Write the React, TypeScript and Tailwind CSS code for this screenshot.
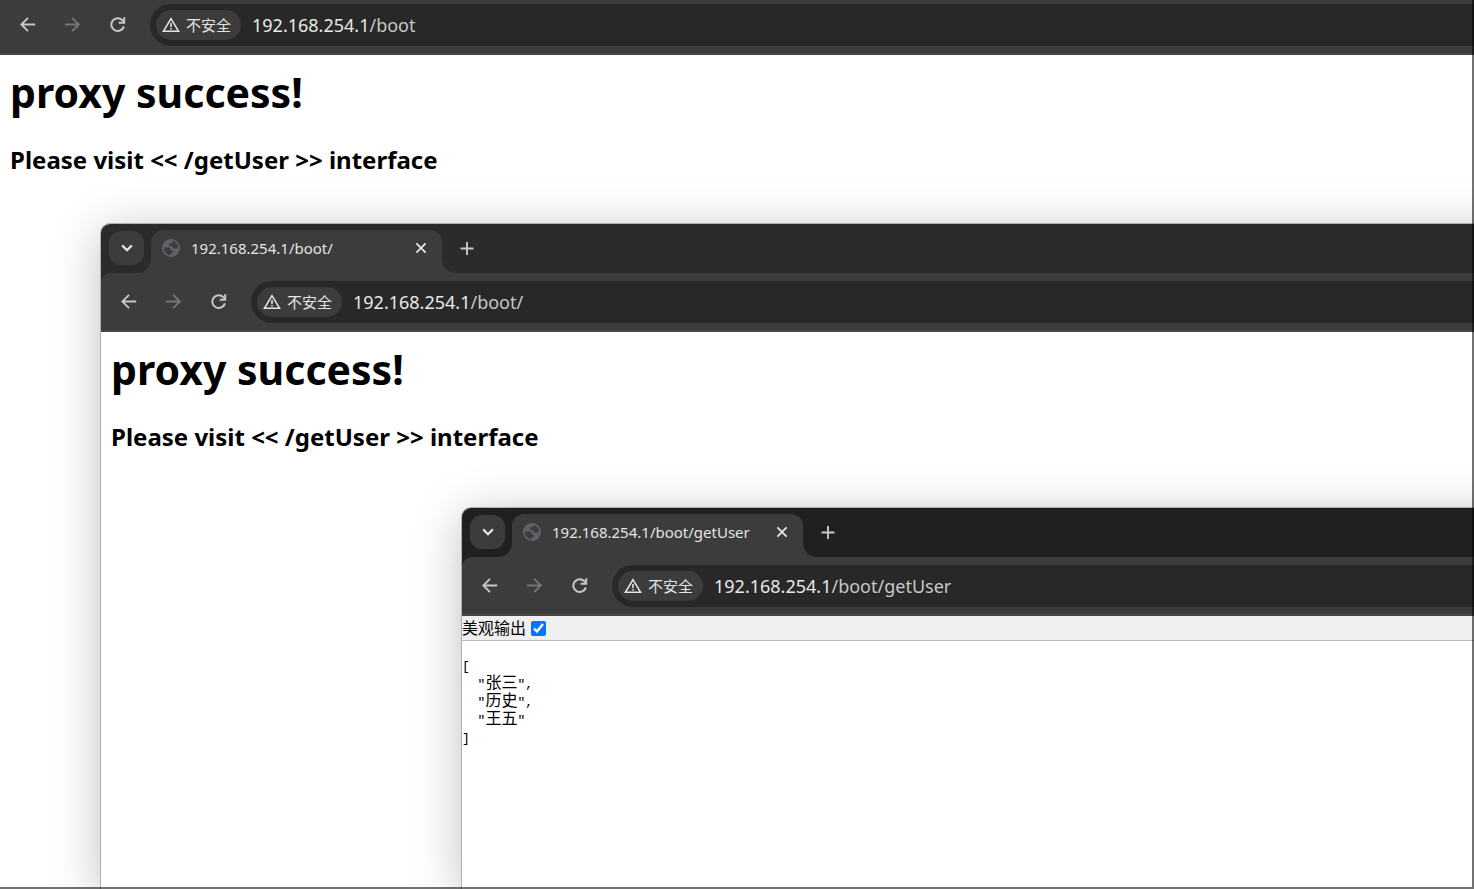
import React from 'react';

type IconProps = { className?: string };

const ArrowIcon: React.FC<IconProps> = ({ className }) => (
  <svg viewBox="0 0 16 16" className={className} fill="none" stroke="currentColor" strokeWidth="1.9">
    <path d="M15.2 7.5H1.9M8 .8L1.3 7.5 8 14.2" />
  </svg>
);

const ForwardIcon: React.FC<IconProps> = ({ className }) => (
  <svg viewBox="0 0 16 16" className={className} fill="none" stroke="currentColor" strokeWidth="1.9">
    <path d="M0 7.5h13.3M7.2.8l6.7 6.7-6.7 6.7" />
  </svg>
);

const ReloadIcon: React.FC<IconProps> = ({ className }) => (
  <svg viewBox="0 0 16 16" className={className} fill="none" stroke="currentColor" strokeWidth="2">
    <path d="M13.9 9.4A6.4 6.4 0 1 1 12.3 3.1L14.1 4.9" />
    <path d="M14.2.2v5.5H8.7" />
  </svg>
);

const WarningIcon: React.FC<IconProps> = ({ className }) => (
  <svg viewBox="0 0 18 16" className={className} fill="none" stroke="currentColor" strokeWidth="1.6">
    <path d="M9 1.7L1.5 14.2h15z" />
    <path d="M9 6v4M9 11v1.6" />
  </svg>
);

const ChevronIcon: React.FC<IconProps> = ({ className }) => (
  <svg viewBox="0 0 12 8" className={className} fill="none" stroke="currentColor" strokeWidth="2.2">
    <path d="M1.2 1.4L6 6.2l4.8-4.8" />
  </svg>
);

const CloseIcon: React.FC<IconProps> = ({ className }) => (
  <svg viewBox="0 0 12 12" className={className} fill="none" stroke="currentColor" strokeWidth="1.9">
    <path d="M1.4 1.4l9.2 9.2M10.6 1.4l-9.2 9.2" />
  </svg>
);

const PlusIcon: React.FC<IconProps> = ({ className }) => (
  <svg viewBox="0 0 14 14" className={className} fill="none" stroke="currentColor" strokeWidth="1.9">
    <path d="M7 0v13M.5 6.5h13" />
  </svg>
);

const GlobeIcon: React.FC<IconProps> = ({ className }) => (
  <svg viewBox="0 0 18 18" className={className}>
    <circle cx="9" cy="9" r="9" fill="#5f6368" />
    <path
      d="M1.8 8.6h4.4c1.7 0 2.6.9 2.6 2.3v.5h1.9v2.7H8.6v2.2A7.3 7.3 0 0 1 1.8 8.6zM10.4 1.9c3 .6 5.2 2.9 5.8 5.8l-1 1.8h-2.9c-1 0-1.6-.7-1.6-1.6V7.300H7.200V4.300h2.300c.6 0 .9-.5.9-2.400z"
      fill="#3c3c3c"
    />
  </svg>
);

type ToolbarProps = { path: string; className?: string };

const Toolbar: React.FC<ToolbarProps> = ({ path, className }) => (
  <div className={`flex items-center bg-[#3c3c3c] border-b-2 border-[#474747] pb-[7px] pl-5 ${className}`}>
    <div className="flex gap-[29px] text-[#c7c7c7]">
      <button aria-label="Back">
        <ArrowIcon className="size-4" />
      </button>
      <button aria-label="Forward" className="text-[#757575]" disabled>
        <ForwardIcon className="size-4" />
      </button>
      <button aria-label="Reload">
        <ReloadIcon className="size-4" />
      </button>
    </div>
    <div className="ml-6 flex h-[42px] flex-1 items-center rounded-l-full bg-[#282828] pl-[6px]">
      <button className="flex h-[30px] items-center gap-[6px] rounded-full bg-[#3c3c3c] pl-[6px] pr-[10px] text-[15px] text-[#e3e3e3]">
        <WarningIcon className="h-4 w-[18px]" />
        <span>不安全</span>
      </button>
      <div className="ml-[11px] whitespace-nowrap text-[18px] text-[#c7c7c7]">
        <span className="text-[#e8e8e8]">192.168.254.1</span>
        {path}
      </div>
    </div>
  </div>
);

type WindowProps = {
  path: string;
  stripClassName: string;
  className: string;
  children: React.ReactNode;
};

const BrowserWindow: React.FC<WindowProps> = ({ path, stripClassName, className, children }) => (
  <section
    className={`absolute -right-12 bottom-0 flex flex-col overflow-hidden rounded-tl-[10px] border-t border-l border-[#b0b0b0] bg-white shadow-[0_8px_48px_rgba(0,0,0,0.25)] ${className}`}
  >
    <div className={stripClassName}>
      <div className="flex h-[49px] pl-2">
        <button
          aria-label="Search tabs"
          className="mt-[7px] flex h-[34px] w-[35px] items-center justify-center rounded-xl bg-[#3c3c3c] text-[#e3e3e3]"
        >
          <ChevronIcon className="h-2 w-3" />
        </button>
        <div className="relative ml-[7px] mt-[6px] flex h-[43px] w-[291px] items-center rounded-t-xl bg-[#3c3c3c] pb-[7px] pl-[11px] pr-[15px] text-[#e3e3e3]">
          <svg viewBox="0 0 14 14" className="absolute right-full bottom-0 size-[14px]">
            <path d="M14 0v14H0A14 14 0 0 0 14 0z" fill="#3c3c3c" />
          </svg>
          <GlobeIcon className="size-[18px]" />
          <span className="ml-[11px] flex-1 whitespace-nowrap text-[15px]">192.168.254.1{path}</span>
          <button aria-label="Close tab">
            <CloseIcon className="size-3" />
          </button>
          <svg viewBox="0 0 14 14" className="absolute left-full bottom-0 size-[14px]">
            <path d="M0 0v14h14A14 14 0 0 1 0 0z" fill="#3c3c3c" />
          </svg>
        </div>
        <button aria-label="New tab" className="ml-[18px] self-center text-[#c7c7c7]">
          <PlusIcon className="size-[14px]" />
        </button>
      </div>
      <Toolbar path={path} className="rounded-tl-[10px] pt-2" />
    </div>
    {children}
  </section>
);

const ProxyPage: React.FC = () => (
  <div className="px-[10px] pt-[7px] text-black font-bold">
    <h1 className="text-[41px] leading-[60px]">proxy success!</h1>
    <h3 className="mt-5 text-[24px] leading-9">Please visit &lt;&lt; /getUser &gt;&gt; interface</h3>
  </div>
);

const users = ['张三', '历史', '王五'];

const JsonPage: React.FC = () => (
  <div className="text-base text-black">
    <label className="flex h-[25px] items-center gap-[5px] border-b border-[#b8b8b8] bg-[#efefef]">
      美观输出
      <input type="checkbox" defaultChecked className="size-[15px]" />
    </label>
    <pre className="mt-[17px] font-['Liberation_Mono','Noto_Sans_CJK_SC',monospace] text-[13px] leading-[18px]">
      {'[\n'}
      {users.map((user, i) => (
        <React.Fragment key={user}>
          {'  "'}
          <span className="text-base leading-none">{user}</span>
          {i < users.length - 1 ? '",\n' : '"\n'}
        </React.Fragment>
      ))}
      {']'}
    </pre>
  </div>
);

const App: React.FC = () => {
  return (
    <main className="relative h-screen overflow-hidden bg-white font-['Noto_Sans','Noto_Sans_CJK_SC',sans-serif]">
      <Toolbar path="/boot" className="pt-1" />
      <ProxyPage />
      <BrowserWindow path="/boot/" stripClassName="bg-[#2b2b2b]" className="left-[100px] top-[223px]">
        <ProxyPage />
      </BrowserWindow>
      <BrowserWindow path="/boot/getUser" stripClassName="bg-[#1f2120]" className="left-[461px] top-[507px]">
        <JsonPage />
      </BrowserWindow>
      <div className="pointer-events-none absolute inset-0 border-r-2 border-b-2 border-black/55" />
    </main>
  );
};

export default App;
